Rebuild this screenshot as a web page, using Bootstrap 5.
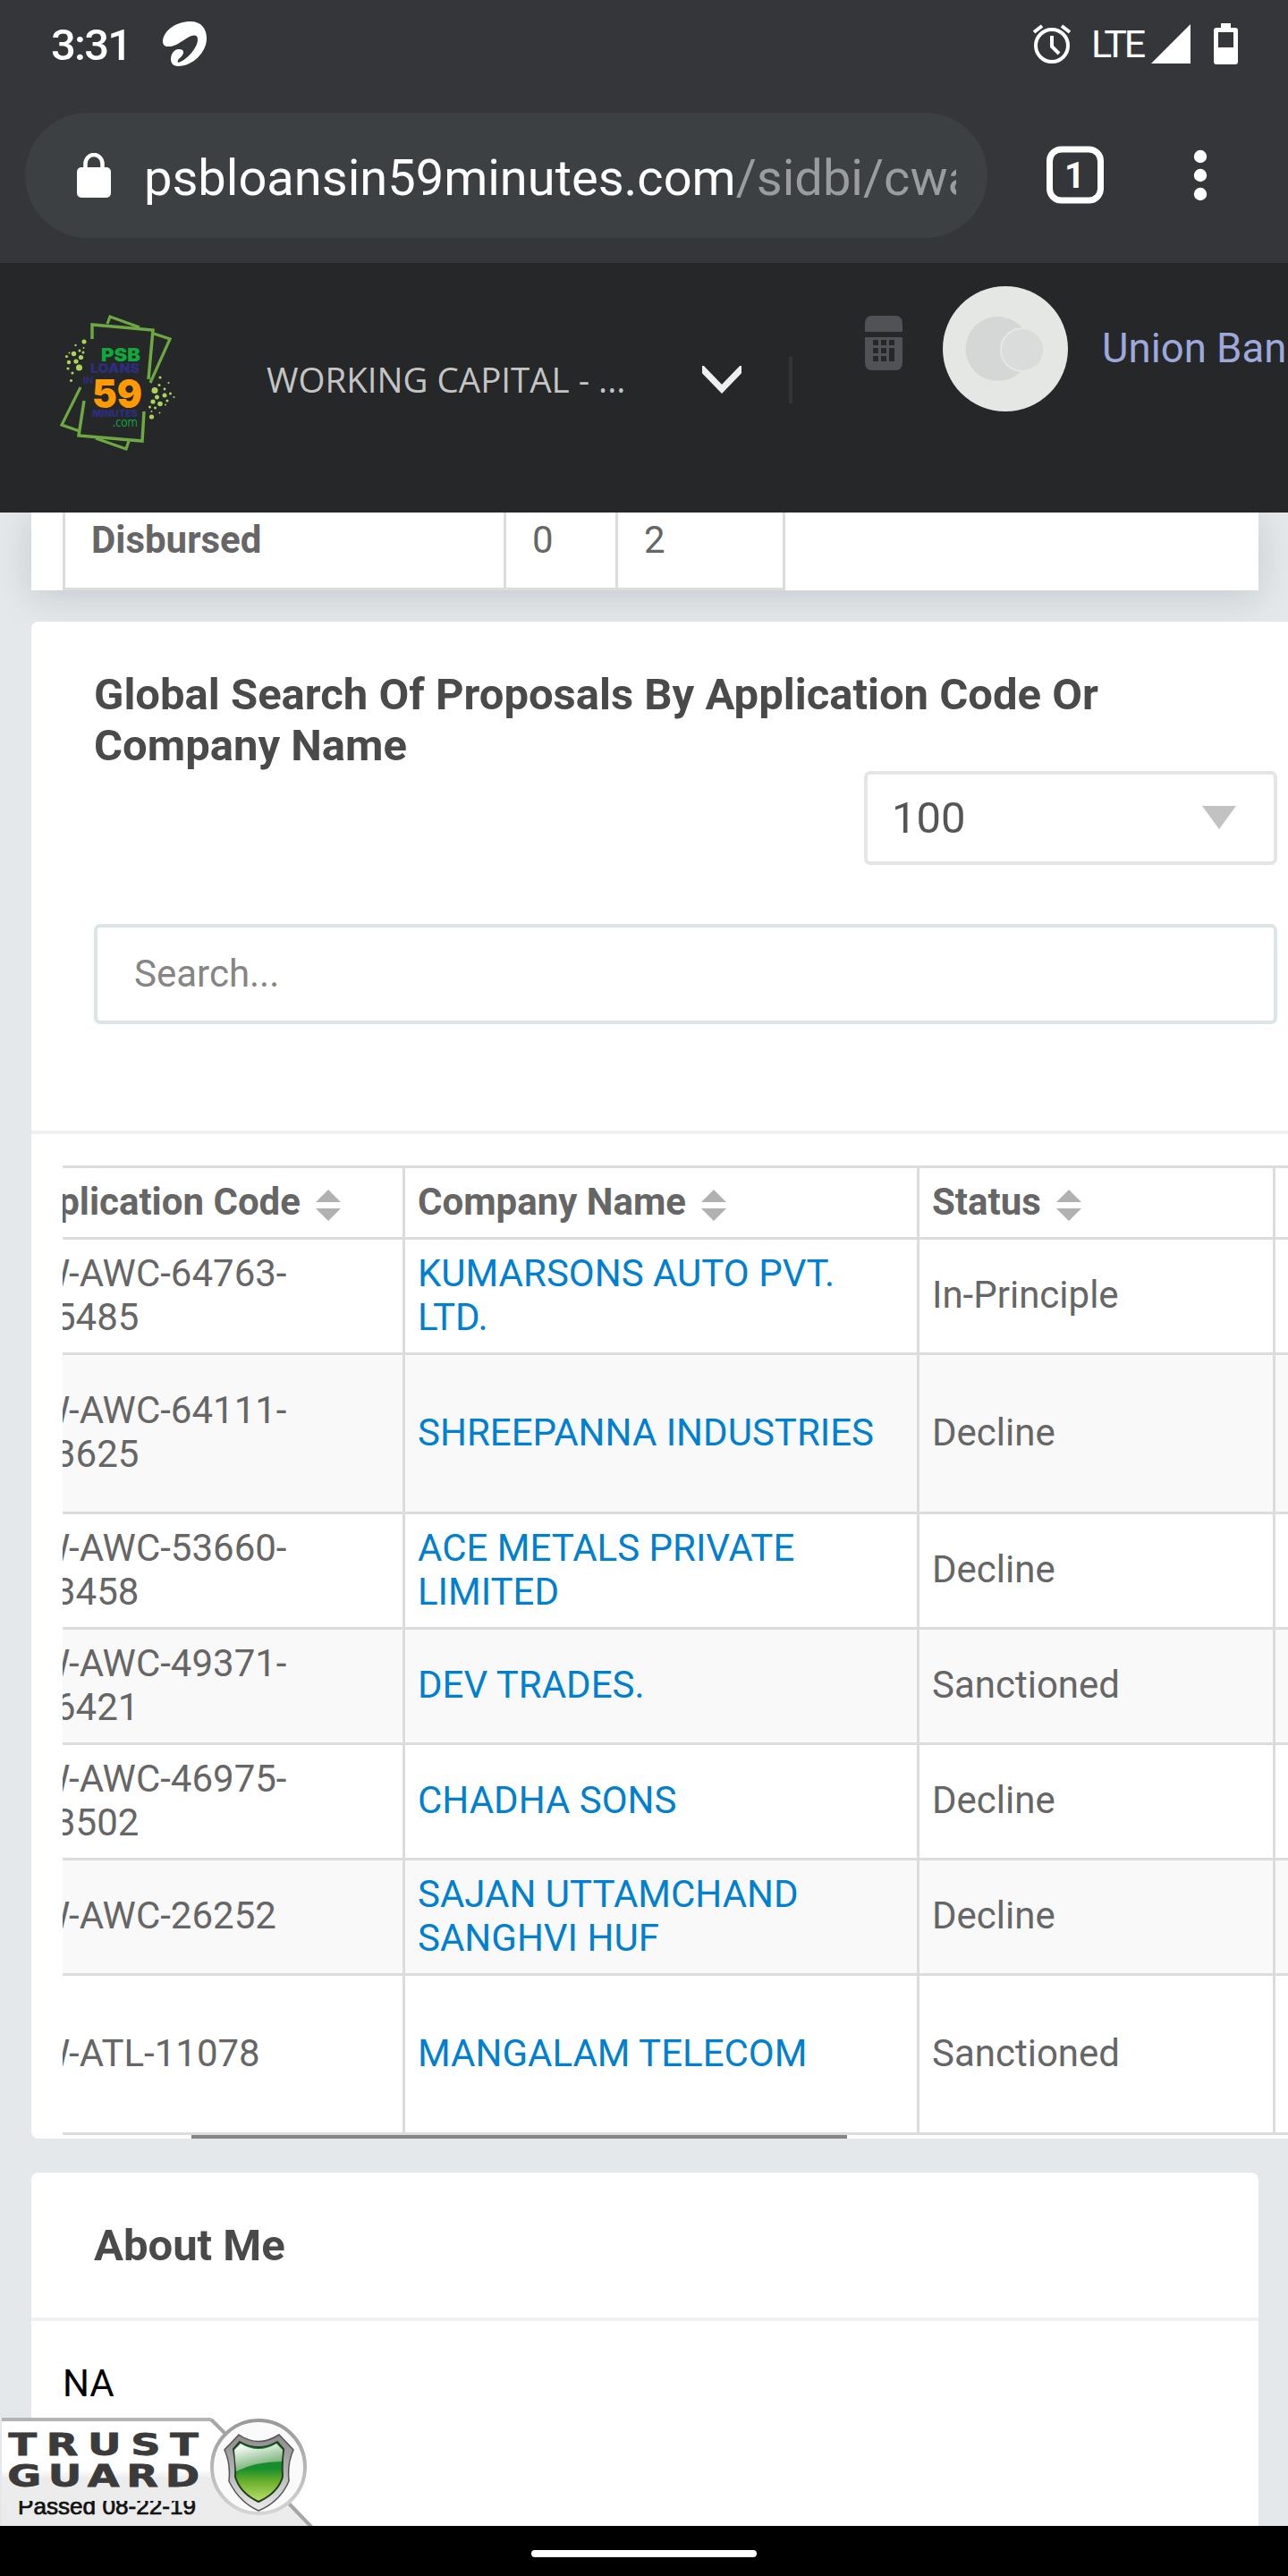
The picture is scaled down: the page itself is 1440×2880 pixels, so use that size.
<!DOCTYPE html>
<html lang="en">
<head>
<meta charset="utf-8">
<meta name="viewport" content="width=device-width, initial-scale=1">
<title>PSB Loans in 59 Minutes</title>
<link href="https://cdn.jsdelivr.net/npm/bootstrap@5.3.0/dist/css/bootstrap.min.css" rel="stylesheet">
<style>
html, body { height: 2880px; overflow: hidden; }
body { background: #e4e8eb; font-family: Roboto, "Liberation Sans", sans-serif; font-size: 42px; line-height: 49px; color: #666; }
svg { display: block; flex: none; }
.status-bar { height: 98px; padding: 0 56px 0 57px; color: #fff; }
.chrome-top { background: #35363a; height: 294px; position: relative; z-index: 3; }
.clock { font-size: 49px; font-weight: 500; letter-spacing: -1.8px; width: 125px; padding-top: 2px; }
.alarm { margin-right: 22px; }
.net { font-size: 43px; letter-spacing: -3.2px; width: 60px; margin-right: 7px; }
.toolbar { padding: 28px 28px 0; }
.omnibox { width: 1076px; height: 140px; background: #3c4043; padding: 0 35px 0 58px; }
.url { font-size: 56px; line-height: 70px; color: #fff; overflow: hidden; white-space: nowrap; width: 908px; margin-left: 37px; padding-top: 5px; }
.url span { color: #9b9c9e; }
.site-header { background: #252729; height: 279px; position: relative; z-index: 2; overflow: hidden; }
.site-header > * { flex: none; }
.product { font-family: "Open Sans", "Noto Sans", sans-serif; font-size: 38.5px; line-height: 56px; color: #c4c4c4; width: 487px; white-space: nowrap; padding-top: 102px; }
.bank { font-size: 45.5px; line-height: 56px; color: #9fa8da; white-space: nowrap; padding-top: 68px; margin-left: 38px; }
.vline { width: 4px; height: 52px; background: #333538; margin: 105px 81px 0 53px; }
.panel { background: #fff; margin-left: 35px; }
.summary-panel { width: 1372px; height: 87px; padding-left: 35px; box-shadow: 0 7px 42px rgba(0,20,30,.14); position: relative; }
.summary-row { height: 87px; border-left: 3px solid #dcdcdc; border-bottom: 3px solid #dcdcdc; width: 808px; }
.summary-row > div { border-right: 3px solid #dcdcdc; padding: 6px 0 0 29px; }
.search-panel { margin-top: 35px; height: 1696px; border-radius: 8px 0 0 8px; position: relative; overflow: hidden; }
.panel-title { font-size: 49px; line-height: 57px; font-weight: 700; color: #4a4a4a; }
.page-size { width: 462px; height: 105px; border: 4px solid #e5e5e5; border-radius: 7px; font-size: 49px; color: #555; padding: 0 42px 0 27px; }
.query { height: 112px; border: 4px solid #dce5e5; border-radius: 7px; color: #858585; padding: 0 0 2px 41px; margin-top: 66px; width: 1323px; }
.rule { height: 4px; background: #f0f0f0; }
.grid-wrap { margin: 35px 0 0 35px; overflow: hidden; height: 1084px; }
.grid { width: 1506px; margin: 0 0 0 -67px; table-layout: fixed; border-collapse: separate; border-spacing: 0; border-top: 3px solid #dcdcdc; color: #666; }
.grid th, .grid td { border: 0 solid #dcdcdc; border-width: 0 3px 3px 0; padding: 0 14px 3px; vertical-align: middle; white-space: nowrap; }
.grid th:first-child { padding-left: 11px; }
.grid tbody tr { height: 129px; }
.grid tbody tr.tall { height: 178px; }
.grid thead tr { height: 80px; }
.grid tbody tr:nth-child(even) td { background: #f9f9f9; }
.grid a { color: #0080cf; text-decoration: none; }
.code { padding-left: 24px; }
.code i { font-style: normal; padding-left: 20px; }
.sort { display: inline-block; margin-left: 7px; vertical-align: -7px; }
.thumb { width: 733px; height: 4px; background: #858585; margin-left: 179px; }
.about-panel { width: 1372px; height: 395px; margin-top: 38px; border-radius: 8px 8px 0 0; }
.seal { position: absolute; left: 0; top: 2700px; z-index: 4; }
.nav-strip { background: #000; height: 56px; position: relative; z-index: 5; padding-top: 6px; }
.home-pill { width: 252px; height: 8px; background: #fff; }
</style>
<script src="https://cdn.jsdelivr.net/npm/bootstrap@5.3.0/dist/js/bootstrap.bundle.min.js"></script>
</head>
<body>
<div class="chrome-top">
  <div class="status-bar d-flex align-items-center">
    <span class="clock">3:31</span>
    <svg width="50" height="50" viewBox="0 0 50 50" fill="none"><path d="M0 22C1 10 15 0 31 0C43 0 49 8 49 19C49 34 34 50 17 50C11 50 9 46 9 42C9 37 12 31 18 31C23 31 25 34 21 39C18 42 16 43 17 46C26 44 39 30 39 20C39 14 33 15 28 18C21 22 13 29 6 28C2 28 0 26 0 22Z" fill="#fff"/></svg>
    <div class="d-flex align-items-center ms-auto">
      <svg class="alarm" width="44" height="46" viewBox="0 0 44 46" fill="none" stroke="#fff" stroke-width="4"><circle cx="22" cy="25" r="18"/><path d="M22 14V26L30 34M2 10L11 3M42 10L33 3"/></svg>
      <span class="net">LTE</span>
      <svg width="44" height="44" viewBox="0 0 44 44"><path d="M44 0V44H0Z" fill="#fff"/></svg>
      <svg style="margin-left:26px" width="27" height="46" viewBox="0 0 27 46"><path fill="#fff" fill-rule="evenodd" d="M8 0H19V5H24Q27 5 27 8V43Q27 46 24 46H3Q0 46 0 43V8Q0 5 3 5H8ZM5 10V27H22V10Z"/></svg>
    </div>
  </div>
  <div class="toolbar d-flex align-items-center">
    <div class="omnibox rounded-pill d-flex align-items-center">
      <svg width="38" height="50" viewBox="0 0 38 50"><rect y="16" width="38" height="34" rx="5" fill="#fff"/><path d="M9.500 18V12a9.500 10 0 0 1 19 0V18" fill="none" stroke="#fff" stroke-width="4.500"/></svg>
      <div class="url">psbloansin59minutes.com<span>/sidbi/cwa</span></div>
    </div>
    <svg style="margin-left:66px" width="64" height="66" viewBox="0 0 64 66"><rect x="3.500" y="4" width="57" height="57" rx="13" fill="none" stroke="#fff" stroke-width="7"/><text x="31.500" y="47" text-anchor="middle" font-family="Roboto" font-weight="700" font-size="40" fill="#fff">1</text></svg>
    <svg style="margin-left:100px" width="16" height="58" viewBox="0 0 16 58" fill="#fff"><circle cx="8" cy="8" r="7.200"/><circle cx="8" cy="29" r="7.200"/><circle cx="8" cy="50" r="7.200"/></svg>
  </div>
</div>

<header class="site-header d-flex align-items-start">
  <svg width="298" height="279" viewBox="0 294 298 279">
    <g fill="none" stroke="#6da843" stroke-width="3.600">
      <path d="M120 362L123 354L156 366M172 373L190 379L168 428M90 433L69 475L89 482M107 490L141 502L144 493" stroke-width="3.200"/>
      <path d="M103 379V363L171 369L166 424M94 448L88 487L159 493L161 460" stroke-width="3.500"/>
    </g>
    <g fill="#acd45c"><circle cx="94" cy="382" r="2.500"/><circle cx="82.500" cy="395.500" r="2.700"/><circle cx="90.500" cy="399.500" r="2.600"/><circle cx="88.500" cy="411" r="3.500"/><circle cx="85" cy="404" r="2.600"/><circle cx="77" cy="405" r="2.200"/><circle cx="76" cy="412" r="1.600"/><circle cx="81" cy="417" r="1.600"/><circle cx="79.500" cy="425.500" r="1.600"/><circle cx="74.500" cy="398.500" r="1.600"/><circle cx="89" cy="392" r="1.500"/><circle cx="93" cy="394" r="1.500"/><circle cx="84.500" cy="386" r="1.200"/><circle cx="93.500" cy="389" r="1"/><circle cx="77.500" cy="394.500" r="1"/>
    <circle cx="173" cy="436.500" r="3.500"/><circle cx="175.500" cy="444" r="2.500"/><circle cx="184" cy="442" r="2.500"/><circle cx="171" cy="449" r="2.600"/><circle cx="179" cy="451.500" r="2.800"/><circle cx="169.500" cy="466" r="2.600"/><circle cx="179" cy="422" r="1.600"/><circle cx="178" cy="430.500" r="1.500"/><circle cx="184" cy="435" r="1.400"/><circle cx="190.500" cy="440" r="1.500"/><circle cx="187" cy="448" r="1.500"/><circle cx="173.500" cy="456" r="1.500"/><circle cx="167.500" cy="455" r="1.500"/><circle cx="188.500" cy="428" r="1.100"/><circle cx="194.500" cy="444" r="1.100"/><circle cx="185" cy="452.500" r="1"/><circle cx="169.500" cy="460" r="1"/><circle cx="178.500" cy="461.500" r="1"/></g>
    <g font-family="Inter, Roboto" font-weight="900">
      <text x="113" y="403.500" font-size="20.500" textLength="44" lengthAdjust="spacingAndGlyphs" fill="#11a73b">PSB</text>
      <text x="101" y="417" font-size="15" textLength="55" lengthAdjust="spacingAndGlyphs" fill="#2c2e7b">LOANS</text>
      <text x="93" y="429" font-size="10" font-weight="700" textLength="11" lengthAdjust="spacingAndGlyphs" fill="#2c2e7b">IN</text>
      <text x="103" y="455.500" font-size="44" textLength="56" lengthAdjust="spacingAndGlyphs" fill="#ff9a00">59</text>
      <text x="103" y="466" font-size="10" textLength="51" lengthAdjust="spacingAndGlyphs" fill="#2c2e7b">MINUTES</text>
    </g>
    <text x="126" y="477" font-family="Open Sans" font-size="14" textLength="28" lengthAdjust="spacingAndGlyphs" fill="#11a73b">.com</text>
  </svg>
  <div class="product">WORKING CAPITAL - ...</div>
  <svg style="margin-top:115px" width="44" height="31" viewBox="0 0 44 31"><path d="M-2 1L22 26L46 1" fill="none" stroke="#efefef" stroke-width="7"/></svg>
  <div class="vline"></div>
  <svg style="margin-top:59px" width="42" height="61" viewBox="0 0 42 61"><path fill="#515256" d="M8 0H34Q42 0 42 9V18H0V9Q0 0 8 0ZM0 24H42V52Q42 61 34 61H8Q0 61 0 52Z"/><path fill="#252729" d="M9 27h6v6H9zM18 27h6v6H18zM27 27h6v6H27zM9 36h6v6H9zM18 36h6v6H18zM27 36h6v15H27zM9 45h6v6H9zM18 45h6v6H18z"/></svg>
  <svg style="margin:26px 0 0 45px" width="140" height="140" viewBox="0 0 140 140"><circle cx="70" cy="70" r="70" fill="#e4e7e4"/><circle cx="61.500" cy="70" r="36" fill="#d5d6d6"/><circle cx="89" cy="71" r="24" fill="#dadbdb" stroke="#e4e7e4" stroke-width="2"/></svg>
  <div class="bank">Union Ban</div>
</header>

<section class="panel summary-panel">
  <div class="summary-row d-flex">
    <div style="width:493px" class="fw-bold">Disbursed</div>
    <div style="width:125px">0</div>
    <div class="flex-grow-1">2</div>
  </div>
</section>

<section class="panel search-panel">
  <div style="padding:53px 12px 0 70px;height:569px">
    <h2 class="panel-title m-0">Global Search Of Proposals By Application Code Or<br>Company Name</h2>
    <div class="page-size ms-auto d-flex align-items-center justify-content-between"><span>100</span>
      <svg width="38" height="26" viewBox="0 0 38 26" style="margin-top:-2px"><path d="M0 0H38L19 26Z" fill="#c2c2c2"/></svg></div>
    <div class="query d-flex align-items-center">Search...</div>
  </div>
  <div class="rule"></div>
  <div class="grid-wrap">
    <table class="grid">
      <colgroup><col style="width:450px"><col style="width:575px"><col style="width:398px"><col></colgroup>
      <thead><tr>
        <th>Application Code <svg class="sort" width="28" height="35" viewBox="0 0 28 35"><path d="M14 0L28 14H0ZM0 21H28L14 35Z" fill="#b1b1b1"/></svg></th>
        <th>Company Name <svg class="sort" width="28" height="35" viewBox="0 0 28 35"><path d="M14 0L28 14H0ZM0 21H28L14 35Z" fill="#b1b1b1"/></svg></th>
        <th>Status <svg class="sort" width="28" height="35" viewBox="0 0 28 35"><path d="M14 0L28 14H0ZM0 21H28L14 35Z" fill="#b1b1b1"/></svg></th>
        <th></th></tr></thead>
      <tbody>
        <tr><td><div class="code">W-AWC-64763-<br><i>5485</i></div></td><td><a href="#">KUMARSONS AUTO PVT.<br>LTD.</a></td><td>In-Principle</td><td></td></tr>
        <tr class="tall"><td><div class="code">W-AWC-64111-<br><i>3625</i></div></td><td><a href="#">SHREEPANNA INDUSTRIES</a></td><td>Decline</td><td></td></tr>
        <tr><td><div class="code">W-AWC-53660-<br><i>3458</i></div></td><td><a href="#">ACE METALS PRIVATE<br>LIMITED</a></td><td>Decline</td><td></td></tr>
        <tr><td><div class="code">W-AWC-49371-<br><i>6421</i></div></td><td><a href="#">DEV TRADES.</a></td><td>Sanctioned</td><td></td></tr>
        <tr><td><div class="code">W-AWC-46975-<br><i>3502</i></div></td><td><a href="#">CHADHA SONS</a></td><td>Decline</td><td></td></tr>
        <tr><td><div class="code">W-AWC-26252</div></td><td><a href="#">SAJAN UTTAMCHAND<br>SANGHVI HUF</a></td><td>Decline</td><td></td></tr>
        <tr class="tall"><td><div class="code">W-ATL-11078</div></td><td><a href="#">MANGALAM TELECOM</a></td><td>Sanctioned</td><td></td></tr>
      </tbody>
    </table>
  </div>
  <div class="thumb"></div>
</section>

<section class="panel about-panel">
  <h2 class="panel-title m-0" style="padding:53px 0 52px 70px">About Me</h2>
  <div class="rule"></div>
  <div class="text-black" style="padding:45px 35px 0">NA</div>
</section>

<footer class="nav-strip d-flex justify-content-center align-items-center"><div class="home-pill rounded-pill"></div></footer>

<svg class="seal" width="350" height="124" viewBox="0 2700 350 124">
  <defs>
    <linearGradient id="gl" x1="0" y1="0" x2="0" y2="1"><stop offset="0" stop-color="#fff"/><stop offset=".48" stop-color="#fff"/><stop offset=".56" stop-color="#ececec"/><stop offset="1" stop-color="#ebebeb"/></linearGradient>
    <linearGradient id="rim" x1="0" y1="0" x2="0" y2="1"><stop offset="0" stop-color="#8b8b8b"/><stop offset=".5" stop-color="#b5b5b5"/><stop offset="1" stop-color="#ededed"/></linearGradient>
    <linearGradient id="leaf" x1="0" y1="0" x2="0" y2="1"><stop offset="0" stop-color="#108a31"/><stop offset=".45" stop-color="#188f2c"/><stop offset=".65" stop-color="#67ae2a"/><stop offset="1" stop-color="#bfe070"/></linearGradient>
    <linearGradient id="shine" x1="0" y1="0" x2=".4" y2="1"><stop offset=".1" stop-color="#fff"/><stop offset="1" stop-color="#68a868"/></linearGradient>
    <linearGradient id="ring" x1="0" y1="0" x2="0" y2="1"><stop offset="0" stop-color="#999"/><stop offset="1" stop-color="#d4d4d4"/></linearGradient>
  </defs>
  <path d="M2 2703H236L350 2824H2Z" fill="url(#gl)"/>
  <path d="M2 2703H236V2707H2Z" fill="#b4b4b4"/>
  <path d="M236 2705L252 2721M322 2798L348 2825" stroke="#a6a6a6" stroke-width="4"/>
  <circle cx="289" cy="2758" r="52" fill="#fafafa" stroke="url(#ring)" stroke-width="4"/>
  <path d="M267 2722Q289 2737 312 2722L328 2739Q321 2754 323 2774Q313 2797 289 2807Q267 2797 256 2774Q258 2754 251 2739Z" fill="url(#rim)" stroke="#555" stroke-width="1.500"/>
  <path d="M268 2730Q289 2742 310 2730L317 2738Q315 2755 316 2769Q311 2787 289 2797Q268 2787 263 2769Q264 2755 261 2738Z" fill="url(#leaf)" stroke="#263c20" stroke-width="2"/>
  <path d="M269 2732Q289 2744 309 2732L316 2739L315 2752Q286 2752 264 2763L262 2739Z" fill="url(#shine)"/>
  <g font-family="DejaVu Sans, sans-serif" font-weight="700" fill="#3b3b3b" stroke="#3b3b3b" stroke-width=".8" font-size="34" transform="scale(1.36 1)">
    <text x="7" y="2745" textLength="156" lengthAdjust="spacing">TRUST</text>
    <text x="6" y="2780" textLength="158" lengthAdjust="spacing">GUARD</text>
  </g>
  <svg x="0" y="2796" width="236" height="20" viewBox="0 2796 236 20"><text x="20" y="2810.500" font-family="Liberation Sans" font-size="25" textLength="199" lengthAdjust="spacingAndGlyphs" fill="#111" stroke="#111" stroke-width=".7">Passed 08-22-19</text></svg>
</svg>
</body>
</html>
